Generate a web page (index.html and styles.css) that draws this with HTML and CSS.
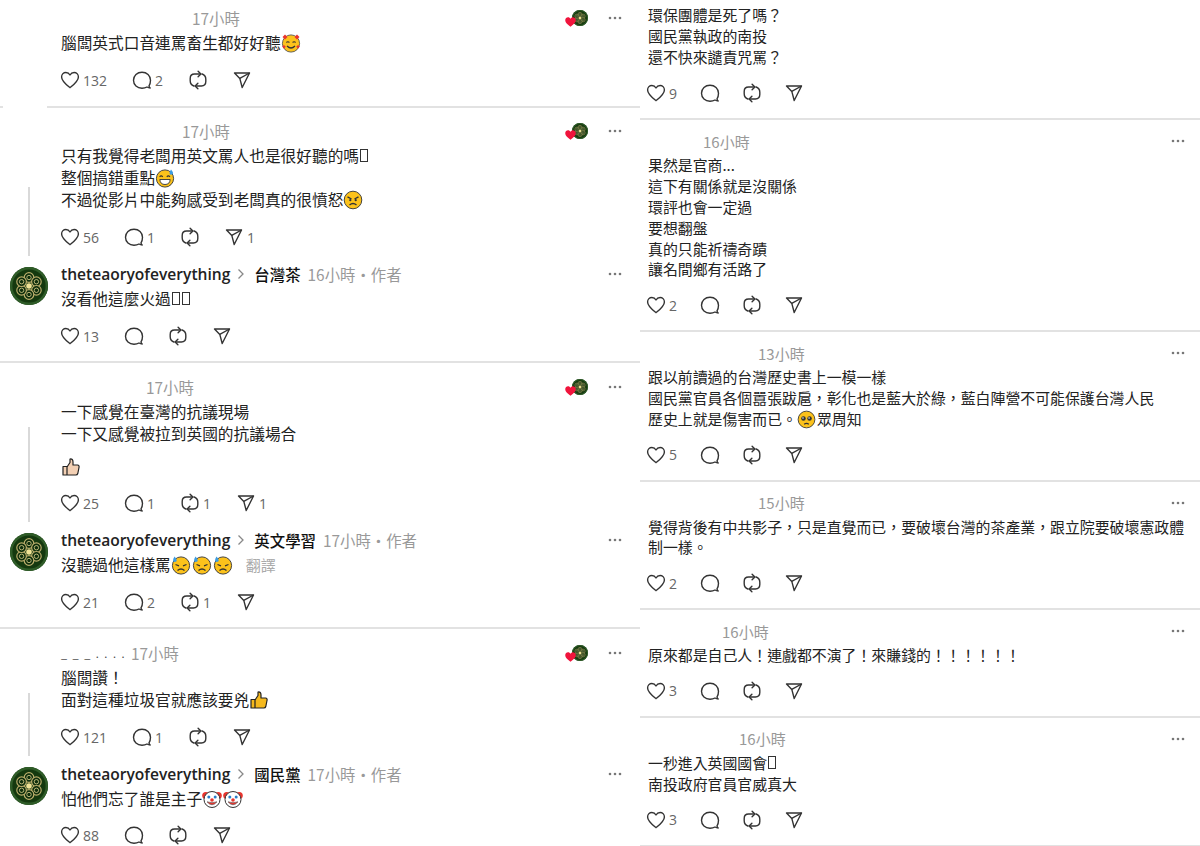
FILE: index.html
```html
<!DOCTYPE html>
<html lang="zh-Hant">
<head>
    <meta charset="UTF-8">
    <meta name="viewport" content="width=device-width, initial-scale=1.0">
    <title>Threads 留言</title>
    <link rel="stylesheet" href="styles.css">
</head>
<body>
<svg class="defs" aria-hidden="true">
    <symbol id="i-heart" viewBox="0 0 20 20"><path d="M10 17.6C5.6 14 1.6 11 1.6 6.9 1.6 4.3 3.6 2.5 5.9 2.5 7.6 2.5 9.1 3.4 10 5 10.9 3.4 12.4 2.5 14.1 2.5 16.4 2.5 18.4 4.3 18.4 6.9 18.4 11 14.4 14 10 17.6Z" fill="none" stroke="#333" stroke-width="1.4" stroke-linejoin="round"/></symbol>
    <symbol id="i-comment" viewBox="0 0 20 20"><path d="M17 15.8C18 14.4 18.5 12.5 18.5 10.3 18.5 5.6 14.8 2.2 10 2.2S1.5 5.6 1.5 10.3 5.2 18.2 10 18.2C11.8 18.2 13.6 17.8 15 17 16 17.6 17 18 18.2 18 17.5 17.4 17.1 16.6 17 15.8Z" fill="none" stroke="#333" stroke-width="1.4" stroke-linejoin="round"/></symbol>
    <symbol id="i-repost" viewBox="0 0 20 20"><g fill="none" stroke="#333" stroke-width="1.4" stroke-linecap="round" stroke-linejoin="round"><path d="M5.8 16C3.6 15.2 2.2 13.2 2.2 10.8V8.4C2.2 5.8 4.1 4 6.6 4H12.8"/><path d="M10.1 1.2 12.9 4 10.1 6.8"/><path d="M14.2 4C16.4 4.8 17.8 6.8 17.8 9.2V11.6C17.8 14.2 15.9 16 13.4 16H7.2"/><path d="M9.900 18.8 7.100 16 9.900 13.200"/></g></symbol>
    <symbol id="i-send" viewBox="0 0 20 20"><g fill="none" stroke="#333" stroke-width="1.4" stroke-linejoin="round"><path d="M17.500 3H2.500L7.800 8.400 10.200 17.500Z"/><path d="M7.800 8.400 17.500 3"/></g></symbol>
    <symbol id="i-dots" viewBox="0 0 14 4"><circle cx="2" cy="2" r="1.300" fill="#777"/><circle cx="7" cy="2" r="1.300" fill="#777"/><circle cx="12" cy="2" r="1.300" fill="#777"/></symbol>
    <symbol id="i-chevron" viewBox="0 0 8 12"><path d="M1.500 1.500 6 6 1.500 10.500" fill="none" stroke="#888" stroke-width="1.300"/></symbol>
    <symbol id="i-redheart" viewBox="0 0 12 11"><path d="M6 10.800C2.500 8 .2 6.200.2 3.500.2 1.500 1.700.2 3.300.2 4.500.2 5.500.9 6 2 6.500.9 7.500.2 8.700.2 10.300.2 11.800 1.500 11.800 3.500 11.800 6.200 9.500 8 6 10.800Z" fill="#f0143c"/></symbol>
    <symbol id="i-avatar" viewBox="0 0 38 38">
        <circle cx="19" cy="19" r="19" fill="#15390f"/>
        <circle cx="19" cy="19" r="17.800" fill="none" stroke="#2f5c28" stroke-width="2.400"/>
        <g fill="#0f2e0c" stroke="#bcae6c" stroke-width="1.200">
            <circle cx="19" cy="10.500" r="4.800"/><circle cx="26.400" cy="14.700" r="4.800"/><circle cx="26.400" cy="23.300" r="4.800"/>
            <circle cx="19" cy="27.500" r="4.800"/><circle cx="11.600" cy="23.300" r="4.800"/><circle cx="11.600" cy="14.700" r="4.800"/>
        </g>
        <g fill="none" stroke="#dcd08c" stroke-width=".8">
            <circle cx="19" cy="10.500" r="2.200"/><circle cx="26.400" cy="14.700" r="2.200"/><circle cx="26.400" cy="23.300" r="2.200"/>
            <circle cx="19" cy="27.500" r="2.200"/><circle cx="11.600" cy="23.300" r="2.200"/><circle cx="11.600" cy="14.700" r="2.200"/>
        </g>
        <circle cx="19" cy="19" r="2.800" fill="#f0e296"/>
    </symbol>
    <symbol id="e-hearts" viewBox="0 0 20 20"><circle cx="10" cy="10.500" r="8.600" fill="#fcc21b" stroke="#444" stroke-width=".8"/><path d="M5.400 9.500q1.500-1.500 3 0M11.600 9.500q1.500-1.500 3 0" fill="none" stroke="#333" stroke-width="1.100"/><path d="M6 13q4 4 8 0" fill="none" stroke="#333" stroke-width="1.200"/><path d="M4 1.500 6.500 4 4 6.500 1.500 4ZM16 1.500 18.500 4 16 6.500 13.500 4ZM3 12l1.800 1.800L3 15.600 1.200 13.800ZM17 12l1.800 1.800L17 15.600 15.200 13.800Z" fill="#e8352e"/></symbol>
    <symbol id="e-sweat" viewBox="0 0 20 20"><circle cx="10" cy="10.500" r="8.600" fill="#fcc21b" stroke="#333" stroke-width=".9"/><path d="M4.600 8.800q1.500-1.800 3.200 0M11.800 8.800q1.500-1.800 3.200 0" fill="none" stroke="#333" stroke-width="1.100"/><path d="M4.800 11.500h10.400q-.5 5-5.200 5t-5.200-5Z" fill="#fff" stroke="#333" stroke-width=".9"/><path d="M16 1.500q2.800 3 1.800 4.600-1.800 1.400-3.200 0-.6-1.800 1.400-4.600Z" fill="#3c9be0"/></symbol>
    <symbol id="e-angry" viewBox="0 0 20 20"><circle cx="10" cy="10" r="8.800" fill="#fcc21b" stroke="#333" stroke-width=".9"/><path d="M4.500 6.800 8.500 9M15.500 6.800 11.500 9" stroke="#333" stroke-width="1.400"/><circle cx="7.300" cy="10.200" r="1.100" fill="#333"/><circle cx="12.700" cy="10.200" r="1.100" fill="#333"/><path d="M6.500 15q3.500-3 7 0" fill="none" stroke="#333" stroke-width="1.300"/></symbol>
    <symbol id="e-down" viewBox="0 0 20 20"><circle cx="10" cy="10.500" r="8.600" fill="#fcc21b" stroke="#333" stroke-width=".9"/><path d="M4.500 9.500 8 10.800M15.500 9.500 12 10.800" stroke="#333" stroke-width="1.300"/><path d="M6.500 15.500q3.500-3 7 0" fill="none" stroke="#333" stroke-width="1.300"/><path d="M3.500 1.500q2.800 3 2 4.800-1.800 1.400-3.400 0-.6-1.800 1.400-4.800Z" fill="#3c9be0"/></symbol>
    <symbol id="e-clown" viewBox="0 0 20 20"><circle cx="3.800" cy="6.500" r="3.600" fill="#e8352e"/><circle cx="16.200" cy="6.500" r="3.600" fill="#e8352e"/><circle cx="10" cy="10.500" r="8" fill="#fff" stroke="#333" stroke-width="1"/><circle cx="6.800" cy="8" r="1.500" fill="#2a7fc9"/><circle cx="13.200" cy="8" r="1.500" fill="#2a7fc9"/><circle cx="10" cy="11" r="1.800" fill="#e8352e"/><path d="M5 12.800q5 6 10 0-5 1.800-10 0Z" fill="#e8352e" stroke="#333" stroke-width=".5"/></symbol>
    <symbol id="e-plead" viewBox="0 0 20 20"><circle cx="10" cy="10" r="8.800" fill="#fcc21b" stroke="#333" stroke-width=".9"/><circle cx="6.800" cy="9" r="2.400" fill="#333"/><circle cx="13.200" cy="9" r="2.400" fill="#333"/><circle cx="6.300" cy="8.300" r=".8" fill="#fff"/><circle cx="12.700" cy="8.300" r=".8" fill="#fff"/><path d="M7.500 15q2.500-1.800 5 0" fill="none" stroke="#333" stroke-width="1.100"/></symbol>
    <symbol id="e-thumb" viewBox="0 0 20 20"><path d="M2 9.500h4V18H2ZM6 10l3-4.500V2q3-.5 3 3v3h4.500q2 .3 1.500 2.500l-1.200 6q-.4 1.500-2 1.500H6Z" fill="currentColor" stroke="#222" stroke-width="1.200" stroke-linejoin="round"/></symbol>
</svg>

<main class="page">
    <section class="col col-left">

        <article class="post post-top">
            <div class="row">
                <div class="side"></div>
                <div class="body">
                    <div class="meta">
                        <span class="blank" style="width:131px"></span><span class="time">17小時</span>
                        <span class="liked"><svg class="liked-avatar"><use href="#i-avatar"/></svg><svg class="liked-heart"><use href="#i-redheart"/></svg></span>
                        <svg class="dots"><use href="#i-dots"/></svg>
                    </div>
                    <div class="text"><p>腦闆英式口音連罵畜生都好好聽<svg class="emoji"><use href="#e-hearts"/></svg></p></div>
                    <div class="actions">
                        <span class="act"><svg><use href="#i-heart"/></svg><span class="num">132</span></span>
                        <span class="act"><svg><use href="#i-comment"/></svg><span class="num">2</span></span>
                        <span class="act"><svg><use href="#i-repost"/></svg></span>
                        <span class="act"><svg><use href="#i-send"/></svg></span>
                    </div>
                </div>
            </div>
        </article>
        <div class="split-rule"><i class="stub"></i><i class="long"></i></div>

        <article class="post">
            <div class="row">
                <div class="side"><i class="thread thread-a"></i></div>
                <div class="body">
                    <div class="meta">
                        <span class="blank" style="width:121px"></span><span class="time">17小時</span>
                        <span class="liked"><svg class="liked-avatar"><use href="#i-avatar"/></svg><svg class="liked-heart"><use href="#i-redheart"/></svg></span>
                        <svg class="dots"><use href="#i-dots"/></svg>
                    </div>
                    <div class="text">
                        <p>只有我覺得老闆用英文罵人也是很好聽的嗎<span class="tofu"></span></p>
                        <p>整個搞錯重點<svg class="emoji"><use href="#e-sweat"/></svg></p>
                        <p>不過從影片中能夠感受到老闆真的很憤怒<svg class="emoji"><use href="#e-angry"/></svg></p>
                    </div>
                    <div class="actions">
                        <span class="act"><svg><use href="#i-heart"/></svg><span class="num">56</span></span>
                        <span class="act"><svg><use href="#i-comment"/></svg><span class="num">1</span></span>
                        <span class="act"><svg><use href="#i-repost"/></svg></span>
                        <span class="act"><svg><use href="#i-send"/></svg><span class="num">1</span></span>
                    </div>
                </div>
            </div>
            <div class="row reply">
                <div class="side"><svg class="avatar"><use href="#i-avatar"/></svg></div>
                <div class="body">
                    <div class="meta">
                        <span class="name">theteaoryofeverything</span><svg class="chevron"><use href="#i-chevron"/></svg><span class="topic">台灣茶</span><span class="time">16小時・作者</span>
                        <svg class="dots"><use href="#i-dots"/></svg>
                    </div>
                    <div class="text"><p>沒看他這麼火過<span class="tofu"></span><span class="tofu"></span></p></div>
                    <div class="actions">
                        <span class="act"><svg><use href="#i-heart"/></svg><span class="num">13</span></span>
                        <span class="act"><svg><use href="#i-comment"/></svg></span>
                        <span class="act"><svg><use href="#i-repost"/></svg></span>
                        <span class="act"><svg><use href="#i-send"/></svg></span>
                    </div>
                </div>
            </div>
        </article>

        <article class="post">
            <div class="row">
                <div class="side"><i class="thread thread-b"></i></div>
                <div class="body">
                    <div class="meta">
                        <span class="blank" style="width:85px"></span><span class="time">17小時</span>
                        <span class="liked"><svg class="liked-avatar"><use href="#i-avatar"/></svg><svg class="liked-heart"><use href="#i-redheart"/></svg></span>
                        <svg class="dots"><use href="#i-dots"/></svg>
                    </div>
                    <div class="text">
                        <p>一下感覺在臺灣的抗議現場</p>
                        <p>一下又感覺被拉到英國的抗議場合</p>
                        <p class="spaced"><svg class="emoji thumb-light"><use href="#e-thumb"/></svg></p>
                    </div>
                    <div class="actions tight">
                        <span class="act"><svg><use href="#i-heart"/></svg><span class="num">25</span></span>
                        <span class="act"><svg><use href="#i-comment"/></svg><span class="num">1</span></span>
                        <span class="act"><svg><use href="#i-repost"/></svg><span class="num">1</span></span>
                        <span class="act"><svg><use href="#i-send"/></svg><span class="num">1</span></span>
                    </div>
                </div>
            </div>
            <div class="row reply">
                <div class="side"><svg class="avatar"><use href="#i-avatar"/></svg></div>
                <div class="body">
                    <div class="meta">
                        <span class="name">theteaoryofeverything</span><svg class="chevron"><use href="#i-chevron"/></svg><span class="topic">英文學習</span><span class="time">17小時・作者</span>
                        <svg class="dots"><use href="#i-dots"/></svg>
                    </div>
                    <div class="text"><p>沒聽過他這樣罵<svg class="emoji"><use href="#e-down"/></svg><svg class="emoji"><use href="#e-down"/></svg><svg class="emoji"><use href="#e-down"/></svg><span class="translate">翻譯</span></p></div>
                    <div class="actions">
                        <span class="act"><svg><use href="#i-heart"/></svg><span class="num">21</span></span>
                        <span class="act"><svg><use href="#i-comment"/></svg><span class="num">2</span></span>
                        <span class="act"><svg><use href="#i-repost"/></svg><span class="num">1</span></span>
                        <span class="act"><svg><use href="#i-send"/></svg></span>
                    </div>
                </div>
            </div>
        </article>

        <article class="post">
            <div class="row">
                <div class="side"><i class="thread thread-c"></i></div>
                <div class="body">
                    <div class="meta">
                        <span class="dashes">_ _ _ . . . .</span><span class="time">17小時</span>
                        <span class="liked"><svg class="liked-avatar"><use href="#i-avatar"/></svg><svg class="liked-heart"><use href="#i-redheart"/></svg></span>
                        <svg class="dots"><use href="#i-dots"/></svg>
                    </div>
                    <div class="text">
                        <p>腦闆讚！</p>
                        <p>面對這種垃圾官就應該要兇<svg class="emoji thumb-yellow"><use href="#e-thumb"/></svg></p>
                    </div>
                    <div class="actions">
                        <span class="act"><svg><use href="#i-heart"/></svg><span class="num">121</span></span>
                        <span class="act"><svg><use href="#i-comment"/></svg><span class="num">1</span></span>
                        <span class="act"><svg><use href="#i-repost"/></svg></span>
                        <span class="act"><svg><use href="#i-send"/></svg></span>
                    </div>
                </div>
            </div>
            <div class="row reply">
                <div class="side"><svg class="avatar"><use href="#i-avatar"/></svg></div>
                <div class="body">
                    <div class="meta">
                        <span class="name">theteaoryofeverything</span><svg class="chevron"><use href="#i-chevron"/></svg><span class="topic">國民黨</span><span class="time">17小時・作者</span>
                        <svg class="dots"><use href="#i-dots"/></svg>
                    </div>
                    <div class="text"><p>怕他們忘了誰是主子<svg class="emoji"><use href="#e-clown"/></svg><svg class="emoji"><use href="#e-clown"/></svg></p></div>
                    <div class="actions tight">
                        <span class="act"><svg><use href="#i-heart"/></svg><span class="num">88</span></span>
                        <span class="act"><svg><use href="#i-comment"/></svg></span>
                        <span class="act"><svg><use href="#i-repost"/></svg></span>
                        <span class="act"><svg><use href="#i-send"/></svg></span>
                    </div>
                </div>
            </div>
        </article>
    </section>

    <section class="col col-right">
        <article class="note note-top">
            <div class="text">
                <p>環保團體是死了嗎？</p>
                <p>國民黨執政的南投</p>
                <p>還不快來譴責咒罵？</p>
            </div>
            <div class="actions">
                <span class="act"><svg><use href="#i-heart"/></svg><span class="num">9</span></span>
                <span class="act"><svg><use href="#i-comment"/></svg></span>
                <span class="act"><svg><use href="#i-repost"/></svg></span>
                <span class="act"><svg><use href="#i-send"/></svg></span>
            </div>
        </article>

        <article class="note">
            <div class="meta"><span class="blank" style="width:55px"></span><span class="time">16小時</span><svg class="dots"><use href="#i-dots"/></svg></div>
            <div class="text">
                <p>果然是官商...</p>
                <p>這下有關係就是沒關係</p>
                <p>環評也會一定過</p>
                <p>要想翻盤</p>
                <p>真的只能祈禱奇蹟</p>
                <p>讓名間鄉有活路了</p>
            </div>
            <div class="actions">
                <span class="act"><svg><use href="#i-heart"/></svg><span class="num">2</span></span>
                <span class="act"><svg><use href="#i-comment"/></svg></span>
                <span class="act"><svg><use href="#i-repost"/></svg></span>
                <span class="act"><svg><use href="#i-send"/></svg></span>
            </div>
        </article>

        <article class="note">
            <div class="meta"><span class="blank" style="width:110px"></span><span class="time">13小時</span><svg class="dots"><use href="#i-dots"/></svg></div>
            <div class="text">
                <p>跟以前讀過的台灣歷史書上一模一樣</p>
                <p>國民黨官員各個囂張跋扈，彰化也是藍大於綠，藍白陣營不可能保護台灣人民</p>
                <p>歷史上就是傷害而已。<svg class="emoji"><use href="#e-plead"/></svg>眾周知</p>
            </div>
            <div class="actions">
                <span class="act"><svg><use href="#i-heart"/></svg><span class="num">5</span></span>
                <span class="act"><svg><use href="#i-comment"/></svg></span>
                <span class="act"><svg><use href="#i-repost"/></svg></span>
                <span class="act"><svg><use href="#i-send"/></svg></span>
            </div>
        </article>

        <article class="note">
            <div class="meta"><span class="blank" style="width:110px"></span><span class="time">15小時</span><svg class="dots"><use href="#i-dots"/></svg></div>
            <div class="text">
                <p>覺得背後有中共影子，只是直覺而已，要破壞台灣的茶產業，跟立院要破壞憲政體制一樣。</p>
            </div>
            <div class="actions">
                <span class="act"><svg><use href="#i-heart"/></svg><span class="num">2</span></span>
                <span class="act"><svg><use href="#i-comment"/></svg></span>
                <span class="act"><svg><use href="#i-repost"/></svg></span>
                <span class="act"><svg><use href="#i-send"/></svg></span>
            </div>
        </article>

        <article class="note">
            <div class="meta"><span class="blank" style="width:74px"></span><span class="time">16小時</span><svg class="dots"><use href="#i-dots"/></svg></div>
            <div class="text">
                <p>原來都是自己人！連戲都不演了！來賺錢的！！！！！！</p>
            </div>
            <div class="actions">
                <span class="act"><svg><use href="#i-heart"/></svg><span class="num">3</span></span>
                <span class="act"><svg><use href="#i-comment"/></svg></span>
                <span class="act"><svg><use href="#i-repost"/></svg></span>
                <span class="act"><svg><use href="#i-send"/></svg></span>
            </div>
        </article>

        <article class="note">
            <div class="meta"><span class="blank" style="width:91px"></span><span class="time">16小時</span><svg class="dots"><use href="#i-dots"/></svg></div>
            <div class="text">
                <p>一秒進入英國國會<span class="tofu"></span></p>
                <p>南投政府官員官威真大</p>
            </div>
            <div class="actions">
                <span class="act"><svg><use href="#i-heart"/></svg><span class="num">3</span></span>
                <span class="act"><svg><use href="#i-comment"/></svg></span>
                <span class="act"><svg><use href="#i-repost"/></svg></span>
                <span class="act"><svg><use href="#i-send"/></svg></span>
            </div>
        </article>
    </section>
</main>
</body>
</html>
```
FILE: styles.css
```css
*{
    margin: 0;
    padding: 0;
    box-sizing: border-box;
}
body{
    background: #fff;
    color: #222;
    font-family: "Noto Sans CJK TC", "Noto Sans", sans-serif;
    overflow: hidden;
}
.defs{
    display: none;
}
.page{
    display: flex;
    width: 1200px;
    height: 846px;
    overflow: hidden;
}
.col-left{
    width: 640px;
    flex: none;
}
.col-right{
    width: 560px;
    flex: none;
}

/* left column: threaded posts */
.post{
    padding: 14px 0 7px;
    border-bottom: 2px solid #e2e2e2;
}
.post-top{
    padding: 8px 0 8px;
    border-bottom: none;
}
.split-rule{
    display: flex;
    justify-content: space-between;
    height: 2px;
    margin-bottom: -1px;
}
.split-rule i{
    display: block;
    background: #e2e2e2;
}
.stub{
    width: 3px;
}
.long{
    width: 593px;
}
.row{
    display: flex;
    padding-left: 10px;
    gap: 13px;
}
.reply{
    margin-top: 9px;
}
.side{
    width: 38px;
    flex: none;
    display: flex;
    flex-direction: column;
    justify-content: flex-end;
    align-items: center;
}
.reply .side{
    justify-content: flex-start;
}
.thread{
    display: block;
    width: 2px;
    background: #d9d9d9;
    margin-bottom: -1px;
}
.thread-a{
    height: 69px;
}
.thread-b{
    height: 95px;
}
.thread-c{
    height: 63px;
}
.avatar{
    width: 38px;
    height: 38px;
    margin-top: 3px;
}
.body{
    flex: 1;
    min-width: 0;
}

/* meta line */
.meta{
    display: flex;
    align-items: center;
    height: 20px;
    padding-right: 18px;
    font-size: 15.4px;
}
.blank{
    display: block;
    flex: none;
}
.time{
    color: #999;
    white-space: nowrap;
}
.name{
    font-family: "Open Sans", "Noto Sans", sans-serif;
    font-weight: 600;
    font-size: 15.6px;
    color: #222;
}
.chevron{
    width: 8px;
    height: 12px;
    margin: 0 9px 0 7px;
}
.topic{
    font-weight: 500;
    font-size: 15.4px;
    margin-right: 7px;
    color: #111;
}
.dashes{
    width: 70px;
    font-size: 11px;
    color: #444;
    letter-spacing: 1.5px;
}
.dots{
    width: 14px;
    height: 4px;
    margin-left: auto;
}
.liked{
    position: relative;
    margin-left: auto;
    margin-right: 20px;
    width: 23px;
    height: 16px;
}
.liked + .dots{
    margin-left: 0;
}
.liked-avatar{
    position: absolute;
    right: 0;
    top: 0;
    width: 16px;
    height: 16px;
}
.liked-heart{
    position: absolute;
    left: 0;
    bottom: -1px;
    width: 11px;
    height: 10px;
}

/* post text */
.text{
    margin-top: 4px;
    font-size: 15.7px;
    line-height: 22px;
    color: #222;
}
.spaced{
    margin-top: 11px;
}
.emoji{
    width: 20px;
    height: 20px;
    margin-right: 1px;
    vertical-align: -4px;
}
.thumb-light{
    color: #f3d0b4;
}
.thumb-yellow{
    color: #f5b91e;
}
.tofu{
    display: inline-block;
    width: 8px;
    height: 13px;
    margin: 0 1px;
    border: 1px solid #333;
    vertical-align: 0;
}
.translate{
    margin-left: 12px;
    font-size: 15px;
    color: #aaa;
}

/* action row */
.actions{
    display: flex;
    align-items: center;
    height: 36px;
    margin: 8px 0 0 -13px;
}
.actions.tight{
    margin-top: 7px;
}
.act{
    display: flex;
    align-items: center;
    gap: 3px;
    padding: 0 12px;
}
.act svg{
    width: 20px;
    height: 20px;
}
.num{
    font-family: "Open Sans", "Noto Sans", sans-serif;
    font-size: 14px;
    color: #666;
    margin-right: 1px;
}

/* right column: flat list */
.note{
    padding: 11px 15px 7px 8px;
    border-bottom: 2px solid #e2e2e2;
}
.note-top{
    padding-top: 1px;
}
.note .meta{
    padding-right: 0;
    font-size: 15px;
}
.note .text{
    margin: 4px -6px 0 0;
    font-size: 14.9px;
    line-height: 20.8px;
}
.note .actions{
    margin: 7px 0 0 -13px;
}
.note-top .actions{
    margin-top: 8px;
}
.note .act{
    padding: 0 11px;
}
.note .emoji{
    width: 19px;
    height: 19px;
}
```
